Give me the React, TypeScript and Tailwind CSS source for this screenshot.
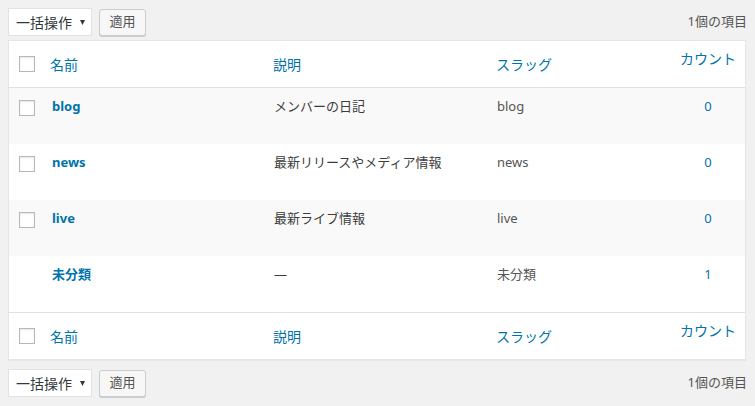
import React from "react";

const font = { fontFamily: '"Noto Sans", "Noto Sans CJK JP", sans-serif' };

const rows = [
  { name: "blog", desc: "メンバーの日記", slug: "blog", count: "0", check: true },
  { name: "news", desc: "最新リリースやメディア情報", slug: "news", count: "0", check: true },
  { name: "live", desc: "最新ライブ情報", slug: "live", count: "0", check: true },
  { name: "未分類", desc: "—", slug: "未分類", count: "1", check: false },
];

const cols = "grid grid-cols-[31px_223px_223px_185px_74px]";

function Checkbox() {
  return (
    <span className="block h-4 w-4 border border-[#b4b9be] bg-white shadow-[inset_0_1px_2px_rgba(0,0,0,0.1)]" />
  );
}

function TableNav() {
  return (
    <div className="flex h-[28px] items-center justify-between">
      <div className="flex items-center gap-[7px]">
        <div className="flex h-[28px] w-[84px] items-center border border-[#e2e2e2] bg-white pl-[7px] text-[14px] text-[#32373c]">
          <span>一括操作</span>
          <svg className="ml-[8px]" width="5" height="5" viewBox="0 0 5 5">
            <polygon points="0,0 5,0 2.5,5" fill="#32373c" />
          </svg>
        </div>
        <button className="flex h-[27px] w-[47px] items-center justify-center rounded-[3px] border border-[#cccccc] bg-[#f7f7f7] text-[13px] text-[#555] shadow-[0_1px_0_#ccc]">
          適用
        </button>
      </div>
      <span className="text-[13px] text-[#555]">1個の項目</span>
    </div>
  );
}

function HeaderRow({ top }: { top?: boolean }) {
  return (
    <div
      className={`${cols} h-[47px] items-center text-[14px] text-[#0073aa] ${
        top ? "border-b border-[#e1e1e1]" : "border-t border-[#e1e1e1]"
      }`}
    >
      <div className="pl-[10px]">
        <Checkbox />
      </div>
      <div className="pl-[10px]">名前</div>
      <div className="pl-[10px]">説明</div>
      <div className="pl-[10px]">スラッグ</div>
      <div className="-mt-[12px] text-center">カウント</div>
    </div>
  );
}

export default function App() {
  return (
    <div style={font} className="min-h-[406px] w-[755px] bg-[#f1f1f1] px-2 pt-2">
      <TableNav />

      <div className="mt-[4px] w-[738px] border border-[#e5e5e5] bg-white shadow-[0_1px_1px_rgba(0,0,0,0.04)]">
        <HeaderRow top />
        {rows.map((r, i) => (
          <div
            key={r.name}
            className={`${cols} h-[56px] items-start text-[13px] ${i % 2 === 0 ? "bg-[#f9f9f9]" : "bg-white"}`}
          >
            <div className="pl-[10px] pt-[12px]">{r.check && <Checkbox />}</div>
            <div className="pl-[12px] pt-[9px] font-bold text-[#0073aa]">{r.name}</div>
            <div className="pl-[11px] pt-[9px] text-[#3c3c3c]">{r.desc}</div>
            <div className="pl-[11px] pt-[9px] text-[#555]">{r.slug}</div>
            <div className="pt-[9px] text-center text-[#0073aa]">{r.count}</div>
          </div>
        ))}
        <HeaderRow />
      </div>

      <div className="mt-[9px]">
        <TableNav />
      </div>
    </div>
  );
}
